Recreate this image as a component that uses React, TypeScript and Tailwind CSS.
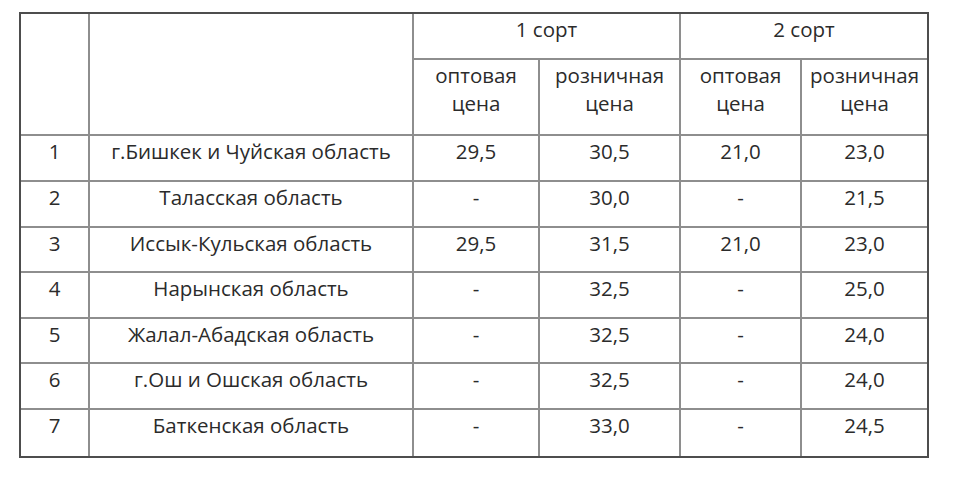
import React from "react";

const rows: [string, string, string, string, string, string][] = [
  ["1", "г.Бишкек и Чуйская область", "29,5", "30,5", "21,0", "23,0"],
  ["2", "Таласская область", "-", "30,0", "-", "21,5"],
  ["3", "Иссык-Кульская область", "29,5", "31,5", "21,0", "23,0"],
  ["4", "Нарынская область", "-", "32,5", "-", "25,0"],
  ["5", "Жалал-Абадская область", "-", "32,5", "-", "24,0"],
  ["6", "г.Ош и Ошская область", "-", "32,5", "-", "24,0"],
  ["7", "Баткенская область", "-", "33,0", "-", "24,5"],
];

const heights = ["h-[46px]", "h-[46px]", "h-[45px]", "h-[46px]", "h-[45px]", "h-[46px]", "h-[46px]"];

export default function App() {
  return (
    <div className="w-[960px] h-[477px] bg-white pt-[12px] pl-[19px] font-['Open_Sans',sans-serif] text-[20.5px] leading-[28px] text-[#2b2b2b]">
      <table className="table-fixed w-[910px] border-separate border-spacing-0 border-2 border-[#4d4d4d]">
        <colgroup>
          <col className="w-[69px]" />
          <col className="w-[324px]" />
          <col className="w-[126px]" />
          <col className="w-[141px]" />
          <col className="w-[121px]" />
          <col className="w-[125px]" />
        </colgroup>
        <tbody>
          <tr className="h-[46px]">
            <td rowSpan={2} className="border-r-2 border-b-2 border-[#8e8e8e]"></td>
            <td rowSpan={2} className="border-r-2 border-b-2 border-[#8e8e8e]"></td>
            <td colSpan={2} className="border-r-2 border-b-2 border-[#8e8e8e] align-top text-center pt-[1px]">1 сорт</td>
            <td colSpan={2} className="border-b-2 border-[#8e8e8e] align-top text-center pt-[1px]">2 сорт</td>
          </tr>
          <tr className="h-[76px]">
            <td className="border-r-2 border-b-2 border-[#8e8e8e] align-top text-center pt-[1px]">оптовая<br />цена</td>
            <td className="border-r-2 border-b-2 border-[#8e8e8e] align-top text-center pt-[1px]">розничная<br />цена</td>
            <td className="border-r-2 border-b-2 border-[#8e8e8e] align-top text-center pt-[1px]">оптовая<br />цена</td>
            <td className="border-b-2 border-[#8e8e8e] align-top text-center pt-[1px]">розничная<br />цена</td>
          </tr>
          {rows.map((r, i) => {
            const last = i === rows.length - 1;
            return (
              <tr key={i} className={heights[i]}>
                {r.map((c, j) => {
                  const lastCol = j === r.length - 1;
                  const cls = [
                    "align-top text-center pt-[1px] whitespace-nowrap border-[#8e8e8e]",
                    lastCol ? "" : "border-r-2",
                    last ? "" : "border-b-2",
                  ].join(" ");
                  return (
                    <td key={j} className={cls}>
                      {c}
                    </td>
                  );
                })}
              </tr>
            );
          })}
        </tbody>
      </table>
    </div>
  );
}
